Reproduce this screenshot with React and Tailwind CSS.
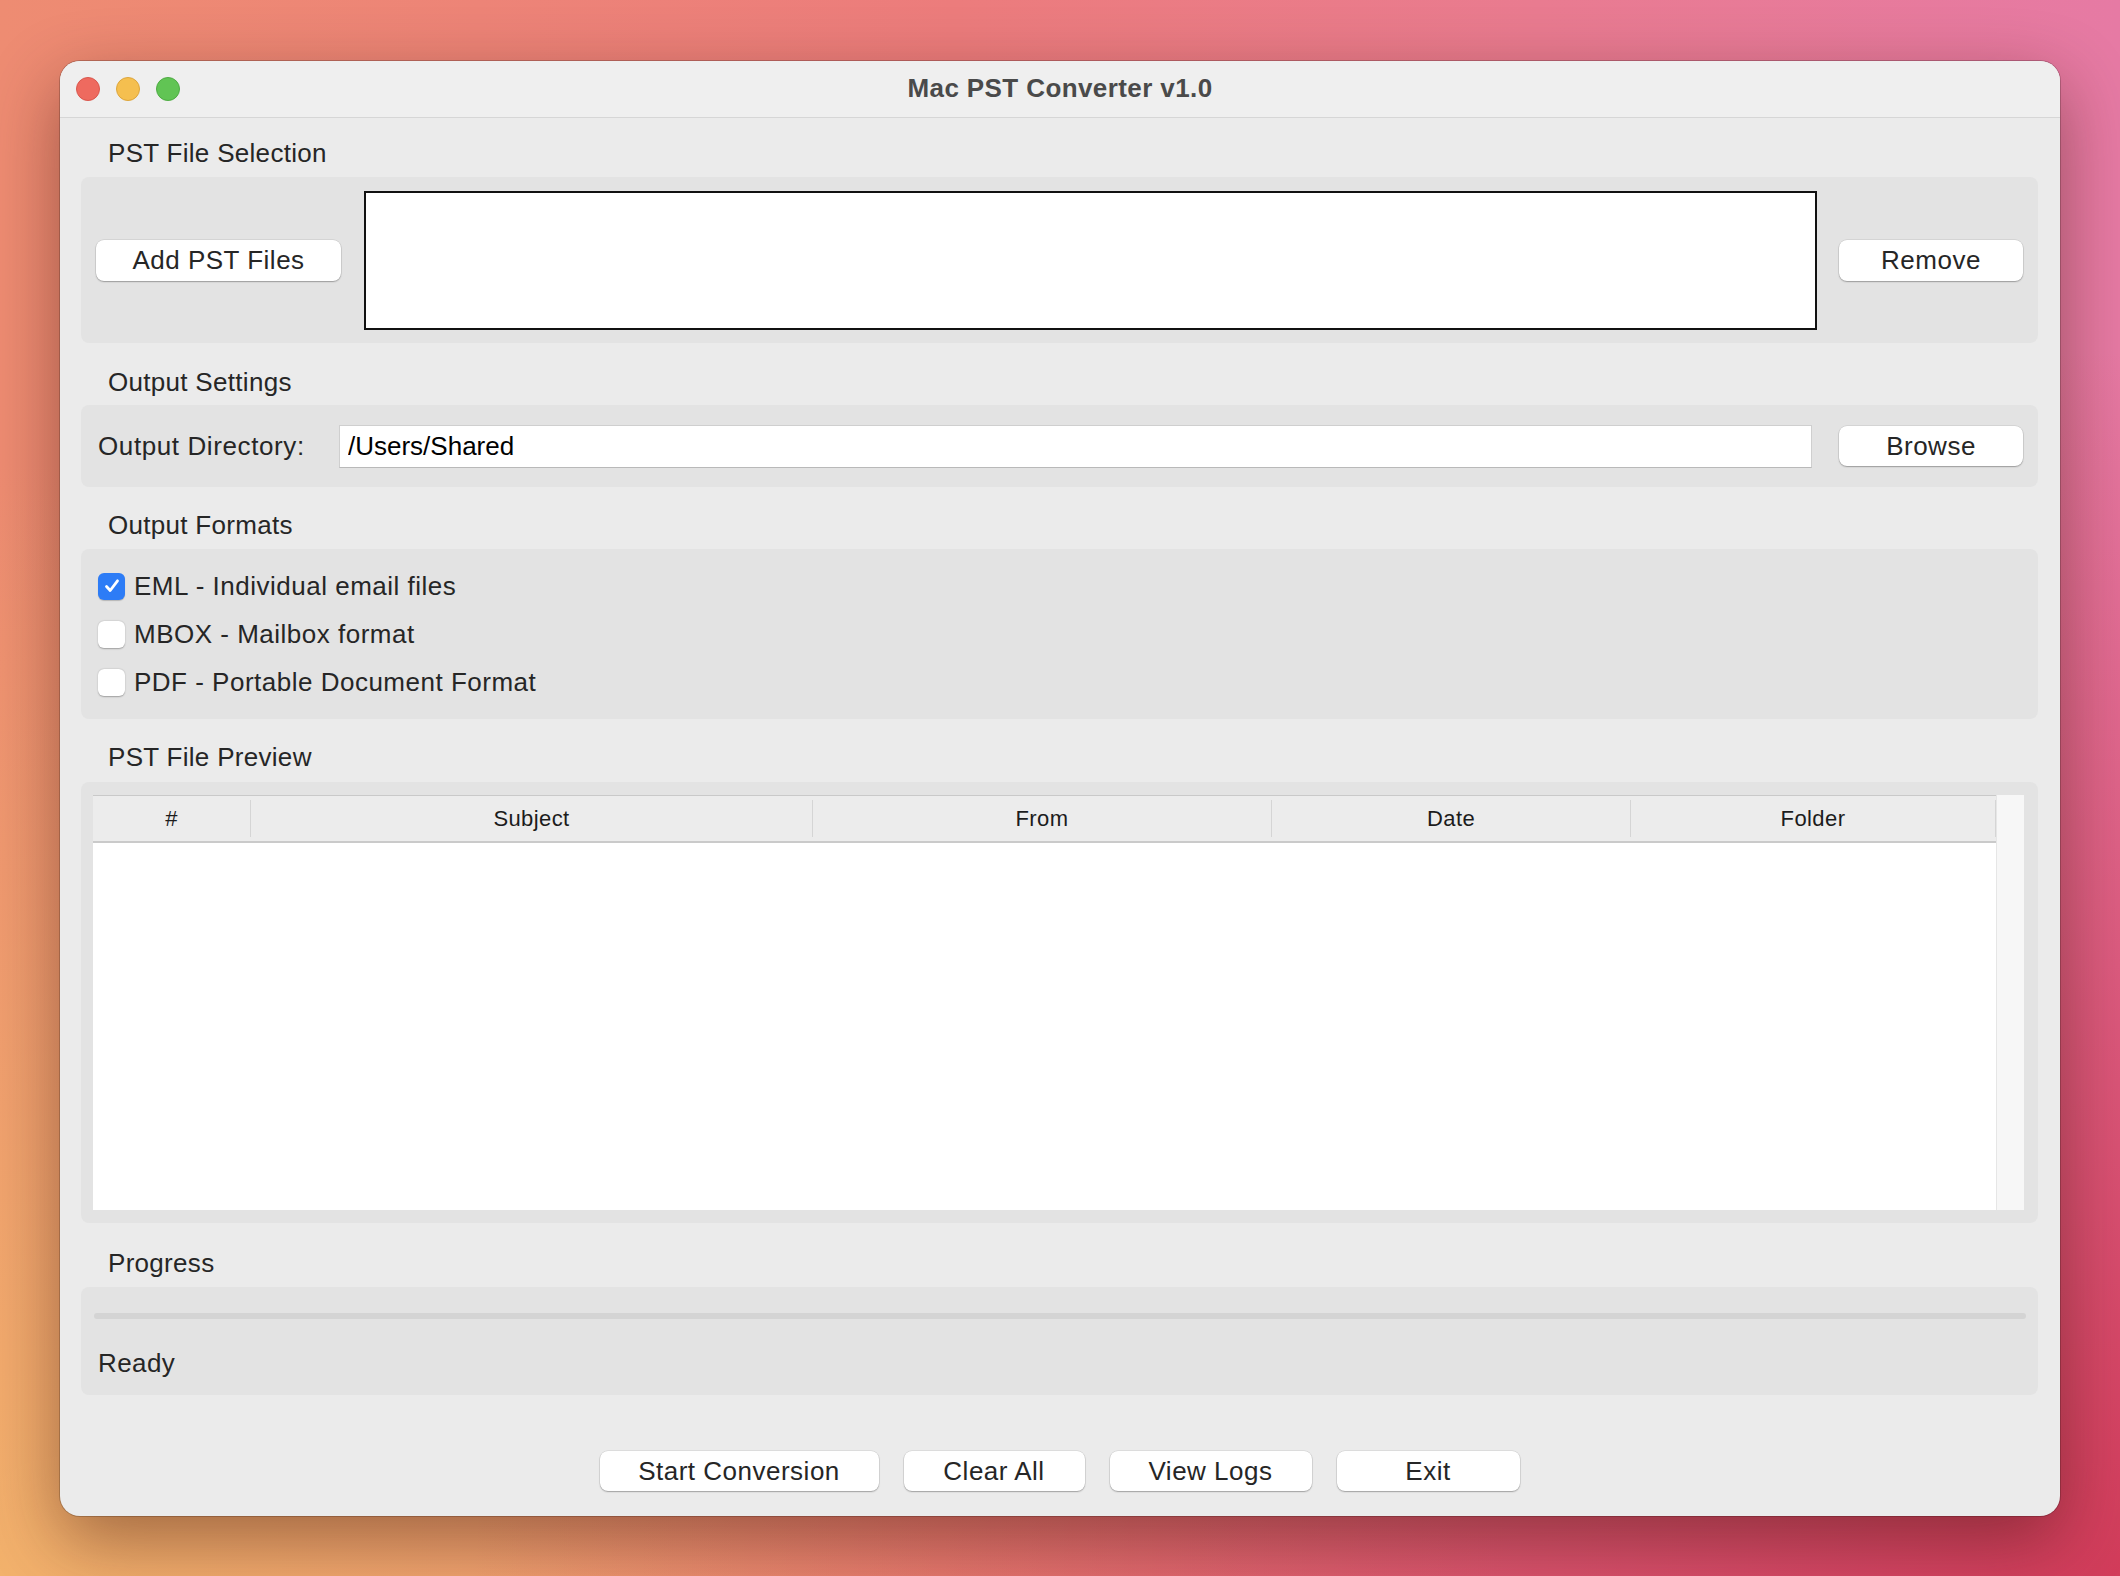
import { useState } from "react";

const FONT = { fontFamily: '"Liberation Sans", Arial, sans-serif' };

function MacButton({ children, className = "" }) {
  return (
    <button
      type="button"
      className={`bg-white rounded-[8px] text-[26px] tracking-[0.5px] text-[#262626] leading-none flex items-center justify-center shadow-[0_1px_1.5px_rgba(0,0,0,0.28),0_0_0_0.5px_rgba(0,0,0,0.12)] ${className}`}
    >
      {children}
    </button>
  );
}

function Checkbox({ checked, onChange, label }) {
  return (
    <label className="flex items-center h-[48px] cursor-pointer">
      <span
        onClick={onChange}
        className={
          checked
            ? "w-[27px] h-[27px] rounded-[6px] bg-[#2d7cf6] flex items-center justify-center shadow-[0_1px_1px_rgba(0,0,0,0.2)]"
            : "w-[27px] h-[27px] rounded-[6px] bg-white shadow-[0_0.5px_1.5px_rgba(0,0,0,0.3)]"
        }
      >
        {checked && (
          <svg width="18" height="18" viewBox="0 0 18 18">
            <path
              d="M3.5 9.5 L7.2 13.5 L14.5 3.8"
              fill="none"
              stroke="white"
              strokeWidth="2.8"
              strokeLinecap="round"
              strokeLinejoin="round"
            />
          </svg>
        )}
      </span>
      <span className="ml-[9px] text-[26px] tracking-[0.5px] text-[#262626]">{label}</span>
    </label>
  );
}

function SectionLabel({ children, className = "" }) {
  return (
    <div className={`h-[32px] leading-[32px] pl-[27px] text-[26px] tracking-[0.3px] text-[#262626] ${className}`}>
      {children}
    </div>
  );
}

export default function App() {
  const [formats, setFormats] = useState({ eml: true, mbox: false, pdf: false });
  const [outDir, setOutDir] = useState("/Users/Shared");

  const toggle = (k) => setFormats((f) => ({ ...f, [k]: !f[k] }));

  const columns = ["#", "Subject", "From", "Date", "Folder"];

  return (
    <div
      style={FONT}
      className="w-[2120px] h-[1576px] overflow-hidden pl-[60px] pt-[61px] bg-[radial-gradient(ellipse_at_100%_100%,#d23c5a_0%,rgba(210,60,90,0)_55%),radial-gradient(ellipse_at_0%_100%,#f3b26c_0%,rgba(243,178,108,0)_50%),linear-gradient(90deg,#ee8c72_0%,#ec7c7c_45%,#e67aa4_100%)]"
    >
      <div className="w-[2000px] h-[1455px] rounded-[20px] overflow-hidden bg-[#ebebeb] flex flex-col shadow-[0_24px_70px_rgba(60,20,10,0.45),0_0_0_1px_rgba(0,0,0,0.2)]">
        {/* title bar */}
        <div className="h-[57px] shrink-0 bg-[#efefef] border-b border-[#d6d6d6] grid grid-cols-[1fr_auto_1fr] items-center">
          <div className="flex items-center gap-[16px] pl-[16px]">
            <span className="w-[24px] h-[24px] rounded-full bg-[#ee6a5f] border border-[#d9574d]" />
            <span className="w-[24px] h-[24px] rounded-full bg-[#f5bf4f] border border-[#dca53c]" />
            <span className="w-[24px] h-[24px] rounded-full bg-[#61c454] border border-[#4eab43]" />
          </div>
          <div className="text-[26px] font-bold tracking-[0.4px] text-[#4a4a4a] pb-[2px]">Mac PST Converter v1.0</div>
          <div />
        </div>

        <div className="flex flex-col pl-[21px] pr-[22px]">
          {/* PST File Selection */}
          <SectionLabel className="mt-[19px]">PST File Selection</SectionLabel>
          <div className="mt-[8px] h-[166px] rounded-[8px] bg-[#e3e3e3] flex items-center pl-[15px] pr-[15px]">
            <MacButton className="w-[245px] h-[41px]">Add PST Files</MacButton>
            <div className="ml-[23px] flex-1 h-[139px] bg-white border-2 border-[#111]" />
            <MacButton className="ml-[22px] w-[184px] h-[41px]">Remove</MacButton>
          </div>

          {/* Output Settings */}
          <SectionLabel className="mt-[23px]">Output Settings</SectionLabel>
          <div className="mt-[7px] h-[82px] rounded-[8px] bg-[#e3e3e3] flex items-center pl-[17px] pr-[15px]">
            <div className="w-[241px] text-[26px] tracking-[0.6px] text-[#262626]">Output Directory:</div>
            <input
              value={outDir}
              onChange={(e) => setOutDir(e.target.value)}
              className="flex-1 h-[43px] bg-white border border-[#cfcfcf] border-b-[#b9b9b9] px-[8px] text-[26px] text-black outline-none"
              style={FONT}
            />
            <MacButton className="ml-[27px] w-[184px] h-[40px]">Browse</MacButton>
          </div>

          {/* Output Formats */}
          <SectionLabel className="mt-[22px]">Output Formats</SectionLabel>
          <div className="mt-[8px] h-[170px] rounded-[8px] bg-[#e3e3e3] flex flex-col pl-[17px] pt-[13px]">
            <Checkbox checked={formats.eml} onChange={() => toggle("eml")} label="EML - Individual email files" />
            <Checkbox checked={formats.mbox} onChange={() => toggle("mbox")} label="MBOX - Mailbox format" />
            <Checkbox checked={formats.pdf} onChange={() => toggle("pdf")} label="PDF - Portable Document Format" />
          </div>

          {/* PST File Preview */}
          <SectionLabel className="mt-[22px]">PST File Preview</SectionLabel>
          <div className="mt-[9px] h-[441px] rounded-[8px] bg-[#e3e3e3] flex pl-[12px] pr-[14px] py-[13px]">
            <div className="flex-1 flex flex-col bg-white">
              <div className="h-[48px] bg-[#ececec] border-t border-[#c9c9c9] border-b-2 border-b-[#cacaca] grid grid-cols-[158px_562px_459px_359px_1fr]">
                {columns.map((c) => (
                  <div key={c} className="flex items-stretch">
                    <span className="flex-1 flex items-center justify-center text-[22px] tracking-[0.4px] text-[#1c1c1c]">{c}</span>
                    <span className="w-px bg-[#d5d5d5] my-[4px]" />
                  </div>
                ))}
              </div>
              <div className="flex-1 bg-white" />
            </div>
            <div className="w-[28px] bg-[#f7f7f7] border-l border-[#e6e6e6]" />
          </div>

          {/* Progress */}
          <SectionLabel className="mt-[24px]">Progress</SectionLabel>
          <div className="mt-[8px] h-[108px] rounded-[8px] bg-[#e3e3e3] flex flex-col pl-[13px] pr-[12px] pt-[26px]">
            <div className="h-[6px] rounded-full bg-[#d4d4d4]" />
            <div className="mt-[28px] pl-[4px] h-[32px] leading-[32px] text-[26px] tracking-[0.4px] text-[#262626]">Ready</div>
          </div>

          {/* Actions */}
          <div className="mt-[56px] flex justify-center gap-[25px]">
            <MacButton className="w-[279px] h-[40px]">Start Conversion</MacButton>
            <MacButton className="w-[181px] h-[40px]">Clear All</MacButton>
            <MacButton className="w-[202px] h-[40px]">View Logs</MacButton>
            <MacButton className="w-[183px] h-[40px]">Exit</MacButton>
          </div>
        </div>
      </div>
    </div>
  );
}
